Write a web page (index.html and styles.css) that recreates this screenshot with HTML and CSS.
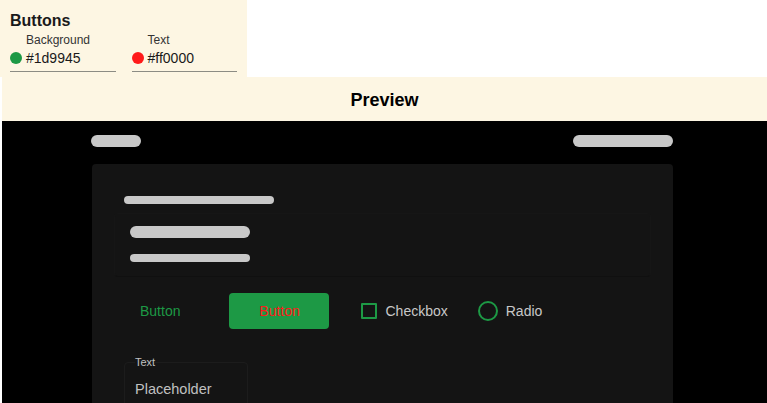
FILE: index.html
```html
<!DOCTYPE html>
<html lang="en">
<head>
<meta charset="utf-8">
<title>Buttons theme</title>
<link rel="stylesheet" href="styles.css">
</head>
<body>
<section class="settings">
  <h2 class="settings-title">Buttons</h2>
  <div class="fields">
    <div class="field">
      <div class="field-label">Background</div>
      <div class="field-value"><span class="dot dot-green"></span>#1d9945</div>
    </div>
    <div class="field">
      <div class="field-label">Text</div>
      <div class="field-value"><span class="dot dot-red"></span>#ff0000</div>
    </div>
  </div>
</section>
<section class="preview">
  <div class="preview-head">Preview</div>
  <div class="preview-body">
    <div class="stage">
      <div class="topbar">
        <span class="pill pill-sm"></span>
        <span class="pill pill-lg"></span>
      </div>
      <div class="card">
        <span class="line line-head"></span>
        <div class="inner">
          <span class="pill pill-md"></span>
          <span class="line line-sub"></span>
        </div>
        <div class="controls">
          <button class="btn btn-text">Button</button>
          <button class="btn btn-filled">Button</button>
          <label class="check"><span class="checkbox"></span>Checkbox</label>
          <label class="check check-radio"><span class="radio"></span>Radio</label>
        </div>
        <fieldset class="textfield">
          <legend class="textfield-label">Text</legend>
          <div class="textfield-placeholder">Placeholder</div>
        </fieldset>
      </div>
    </div>
  </div>
</section>
</body>
</html>
```
FILE: styles.css
```css
html, body {
  margin: 0;
  padding: 0;
  overflow: hidden;
}
body {
  background: #ffffff;
  font-family: "Liberation Sans", Arial, sans-serif;
  color: #1a1a1a;
  width: 767px;
  height: 403px;
}
.settings {
  width: 247px;
  height: 77px;
  box-sizing: border-box;
  background: #fdf6e3;
  padding: 12px 10px 0;
}
.settings-title {
  margin: 0;
  font-size: 16px;
  font-weight: bold;
  line-height: normal;
  color: #1a1a1a;
}
.fields {
  display: flex;
  gap: 16px;
  margin-top: 3px;
}
.field {
  width: 106px;
}
.field-label {
  font-size: 12px;
  padding-left: 16px;
  color: #333;
}
.field-value {
  margin-top: 3px;
  font-size: 14px;
  color: #1a1a1a;
  display: flex;
  align-items: center;
  gap: 4px;
  padding-bottom: 5px;
  border-bottom: 1px solid #8c8c84;
}
.dot {
  width: 12px;
  height: 12px;
  border-radius: 50%;
  display: inline-block;
}
.dot-green { background: #1d9945; }
.dot-red { background: #ff1a1a; }

.preview {
  margin-left: 2px;
}
.preview-head {
  height: 44px;
  background: #fdf6e3;
  display: flex;
  align-items: center;
  justify-content: center;
  padding-top: 2px;
  box-sizing: border-box;
  font-size: 18px;
  font-weight: bold;
  color: #000;
}
.preview-body {
  background: #000;
  height: 282px;
  overflow: hidden;
  padding: 14px 0 0 89px;
  box-sizing: border-box;
}
.stage {
  width: 582px;
}
.topbar {
  display: flex;
  justify-content: space-between;
}
.pill {
  display: block;
  height: 12px;
  border-radius: 6px;
  background: #c8c8c8;
}
.pill-sm { width: 50px; }
.pill-lg { width: 100px; }
.pill-md { width: 120px; }
.line {
  display: block;
  height: 8px;
  border-radius: 4px;
  background: #c8c8c8;
}
.card {
  margin: 17px 0 0 1px;
  background: #141414;
  border-radius: 4px;
  padding: 32px 22px 40px;
  height: 400px;
}
.line-head {
  width: 150px;
  margin-left: 10px;
}
.inner {
  margin-top: 9px;
  box-sizing: border-box;
  height: 64px;
  border: 1px solid #161616;
  border-bottom-color: #101010;
  border-radius: 4px;
  padding: 12px 15px 0;
}
.line-sub {
  width: 120px;
  margin-top: 16px;
}
.controls {
  margin-top: 16px;
  display: flex;
  align-items: center;
  height: 36px;
}
.btn {
  font-family: inherit;
  font-size: 14px;
  border: none;
  height: 36px;
  cursor: pointer;
}
.btn-text {
  background: transparent;
  color: #1d9945;
  padding: 0 26px;
}
.btn-filled {
  margin-left: 23px;
  width: 100px;
  background: #1d9945;
  color: #ff1a1a;
  border-radius: 4px;
  padding: 0;
}
.check {
  display: flex;
  align-items: center;
  gap: 8px;
  margin-left: 32px;
  font-size: 14px;
  color: #c8c8c8;
}
.check-radio {
  margin-left: 30px;
}
.checkbox {
  width: 16px;
  height: 16px;
  box-sizing: border-box;
  border: 2px solid #1d9945;
  border-radius: 1px;
}
.radio {
  width: 20px;
  height: 20px;
  box-sizing: border-box;
  border: 2px solid #1d9945;
  border-radius: 50%;
}
.textfield {
  margin: 27px 0 0 10px;
  width: 124px;
  box-sizing: border-box;
  border: 1px solid #1c1c1c;
  border-radius: 4px;
  padding: 0 10px 12px;
}
.textfield-label {
  font-size: 11px;
  color: #c0c0c0;
  padding: 0;
}
.textfield-placeholder {
  margin-top: 13px;
  font-size: 14.5px;
  color: #c0c0c0;
}
```
